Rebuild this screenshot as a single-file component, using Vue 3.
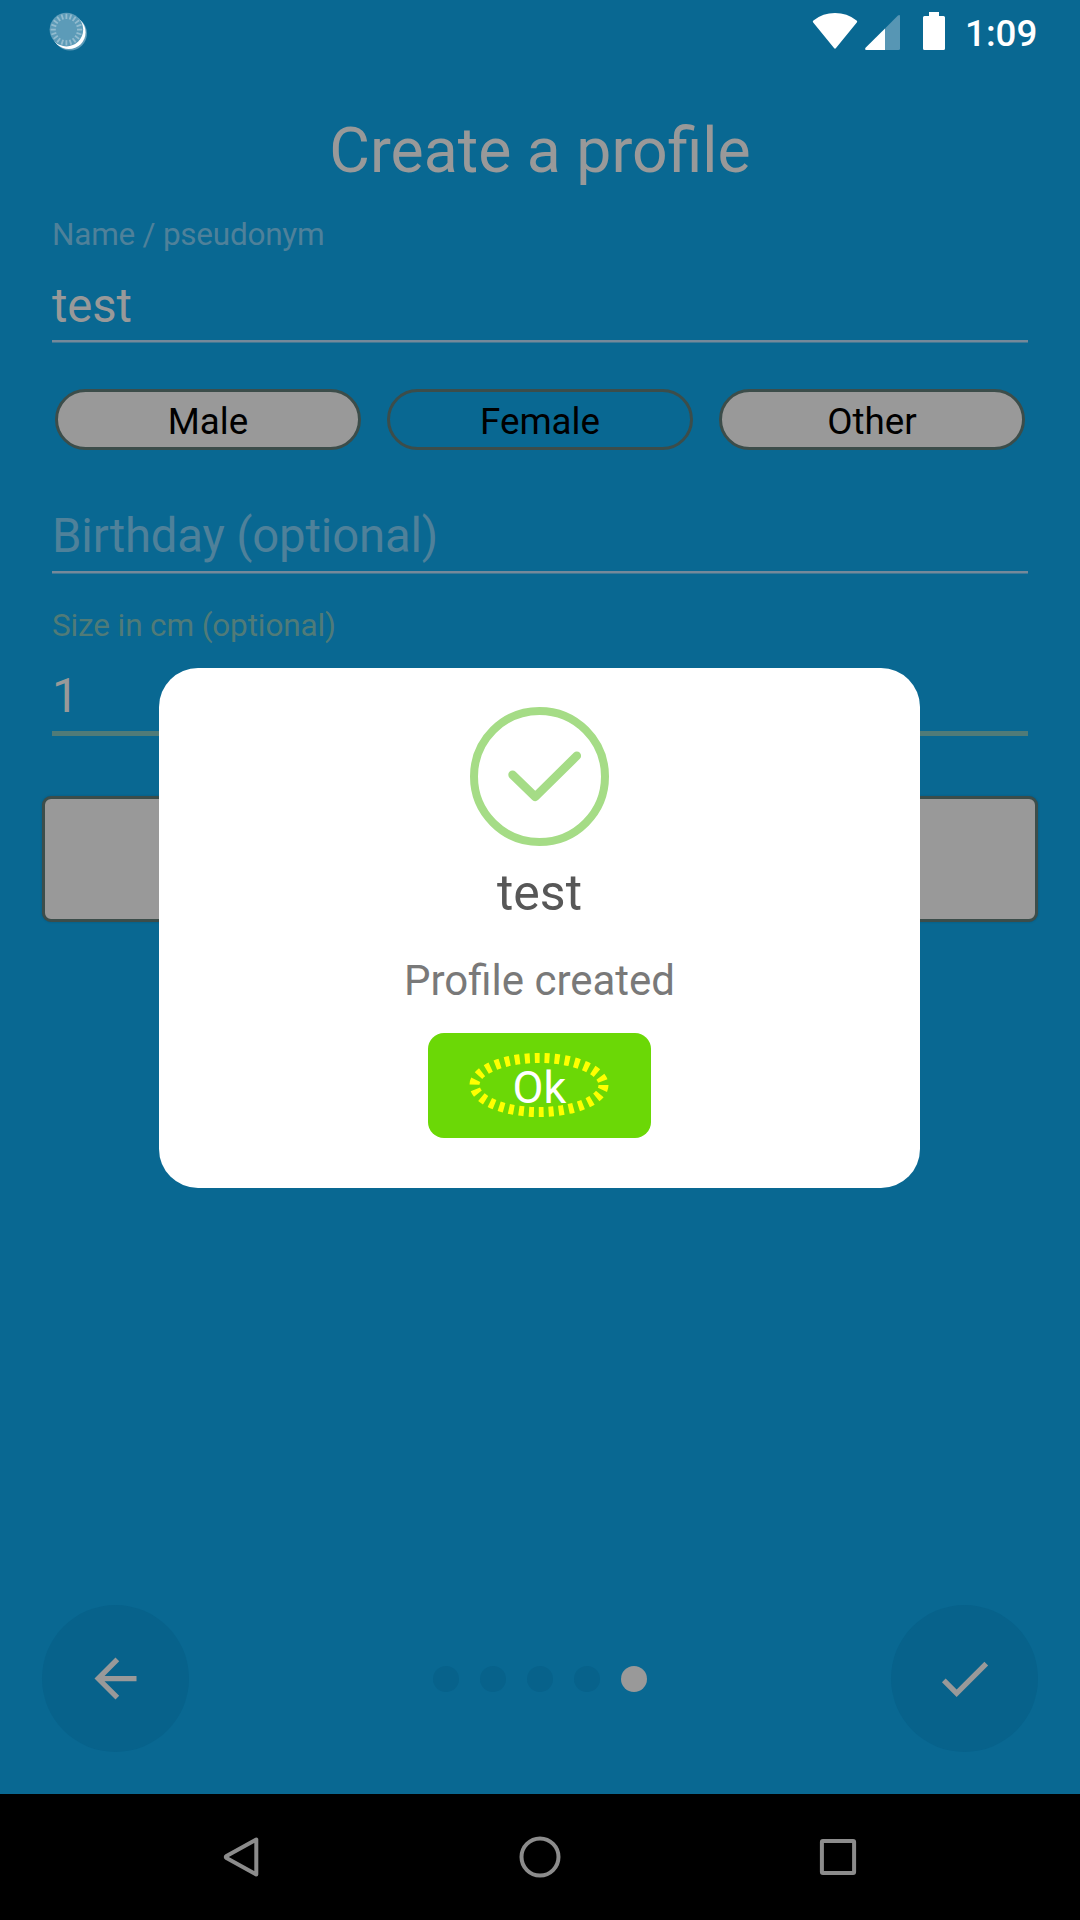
<script setup>
const ticks = Array.from({ length: 20 }, (_, i) => i * 18)
const genders = [
  { label: 'Male', selected: false },
  { label: 'Female', selected: true },
  { label: 'Other', selected: false },
]
const steps = 5
const current = 5
</script>

<template>
  <div class="screen">
    <header class="status">
      <svg class="spinner" width="40" height="42" viewBox="0 0 40 42">
        <circle cx="22" cy="23.600" r="17" fill="#5c9bb8" />
        <circle cx="20.800" cy="22.300" r="16.800" fill="#fff" />
        <circle cx="18.400" cy="19.600" r="16.800" fill="#5c9bb8" />
        <g stroke="#93bccf" stroke-width="1.800">
          <line v-for="a in ticks" :key="a" x1="18.400" y1="9" x2="18.400" y2="3.800" :transform="`rotate(${a} 18.400 19.600)`" />
        </g>
      </svg>
      <svg class="signals" width="140" height="42" viewBox="0 0 140 42">
        <path fill="#fff" d="M3.200 12.600Q2.200 11.400 3.400 10.400Q13 3 25 3Q37 3 46.600 10.400Q47.800 11.400 46.800 12.600L26 38Q25 39.600 24 38Z" />
        <path fill="#5796b4" d="M75 18.400L87.700 5.700Q90 4 90 6.500V38.500Q90 40 88.500 40H75Z" />
        <path fill="#fff" d="M75 18.400V40H56.500Q54 40 55.800 37.600Z" />
        <path fill="#fff" d="M119 2H129V6H133.500Q135 6 135 7.500V38.500Q135 40 133.500 40H114.500Q113 40 113 38.500V7.500Q113 6 114.500 6H119Z" />
      </svg>
      <span class="clock">1:09</span>
    </header>

    <main>
      <h1>Create a profile</h1>
      <div class="field name">
        <label>Name / pseudonym</label>
        <div class="value">test</div>
        <div class="rule"></div>
      </div>
      <div class="genders">
        <div v-for="g in genders" :key="g.label" class="pill" :class="{ selected: g.selected }">{{ g.label }}</div>
      </div>
      <div class="field birthday">
        <div class="value hint">Birthday (optional)</div>
        <div class="rule"></div>
      </div>
      <div class="field size">
        <label>Size in cm (optional)</label>
        <div class="value">1</div>
        <div class="rule focus"></div>
      </div>
      <div class="action"></div>
    </main>

    <footer class="pager">
      <div class="round">
        <svg width="63" height="63" viewBox="0 0 24 24"><path fill="#999" d="M20 11H7.830l5.590-5.590L12 4l-8 8 8 8 1.410-1.410L7.830 13H20v-2z" /></svg>
      </div>
      <div class="dots">
        <i v-for="n in steps" :key="n" :class="{ on: n === current }"></i>
      </div>
      <div class="round">
        <svg width="63" height="63" viewBox="0 0 24 24"><path fill="#999" d="M9 16.170L4.830 12l-1.420 1.410L9 19 21 7l-1.410-1.410z" /></svg>
      </div>
    </footer>

    <nav>
      <svg width="44" height="44" viewBox="0 0 44 44"><path d="M36.300 4.500V39.500L6.500 23Q5 22 6.500 21Z" /></svg>
      <svg width="44" height="44" viewBox="0 0 44 44"><circle cx="22" cy="22" r="18.500" /></svg>
      <svg width="44" height="44" viewBox="0 0 44 44"><rect x="5.900" y="5.900" width="32.200" height="32.200" rx="1" /></svg>
    </nav>

    <div class="dialog">
      <svg class="success" width="139" height="139" viewBox="0 0 139 139" fill="none" stroke="#a5dc86">
        <circle cx="69.500" cy="69.500" r="65.500" stroke-width="8" />
        <path d="M42.600 67.800L65.300 89.800L106.800 48.800" stroke-width="8.600" stroke-linecap="round" stroke-linejoin="round" />
      </svg>
      <div class="dialog-title">test</div>
      <div class="dialog-text">Profile created</div>
      <div class="ok">
        <span>Ok</span>
        <svg class="ring" width="140" height="66" viewBox="0 0 140 66">
          <ellipse cx="70" cy="33" rx="64.500" ry="27" fill="none" stroke="#ff0" stroke-width="10" stroke-dasharray="5 5" />
        </svg>
      </div>
    </div>
  </div>
</template>

<style>
body {
  margin: 0;
  background: #096892;
}
</style>

<style scoped>
.screen {
  position: relative;
  display: flex;
  flex-direction: column;
  width: 1080px;
  height: 1920px;
  overflow: hidden;
  background: #096892;
  font-family: Roboto, sans-serif;
  color: #999;
}
.screen * {
  box-sizing: border-box;
}
svg {
  display: block;
  flex: none;
}
.status {
  display: flex;
  align-items: flex-start;
  height: 63px;
  padding: 10px 42px 0 48px;
  color: #fff;
}
.signals {
  margin-left: auto;
}
.clock {
  width: 73px;
  margin-left: 15px;
  padding-top: 2px;
  font-size: 36.75px;
  font-weight: 500;
  line-height: 44px;
  white-space: nowrap;
}
main {
  flex: none;
  padding: 0 52px;
}
h1 {
  margin: 51px 0 0;
  font-size: 62.5px;
  font-weight: 400;
  line-height: 74px;
  text-align: center;
}
label {
  display: block;
  height: 37px;
  font-size: 31.5px;
  line-height: 37px;
  letter-spacing: -0.24px;
  color: #4f819a;
}
.value {
  height: 56px;
  font-size: 47.25px;
  line-height: 57px;
  letter-spacing: -0.15px;
}
label + .value {
  margin-top: 24px;
}
.name .value {
  line-height: 58px;
}
.hint {
  color: #4f819a;
}
.rule {
  height: 3px;
  margin-top: 7px;
  background: linear-gradient(#75899a 2px, #3f7996 2px);
}
.name {
  margin-top: 28px;
}
.genders {
  display: flex;
  gap: 26px;
  margin: 46px 3px 0;
}
.pill {
  width: 306px;
  height: 61px;
  padding-top: 2px;
  border: 3px solid #3c4d4a;
  border-radius: 31px;
  background: #999;
  color: #000;
  font-size: 36.75px;
  line-height: 55px;
  text-align: center;
}
.pill.selected {
  background: transparent;
}
.birthday {
  margin-top: 58px;
}
.size {
  margin-top: 33px;
}
.size label {
  color: #507b78;
  letter-spacing: -0.13px;
}
.rule.focus {
  height: 5px;
  background: #507b78;
}
.action {
  height: 126px;
  margin: 60px -10px 0;
  border: 3px solid #3c4d4a;
  border-radius: 9px;
  background: #999;
  box-shadow: 0 0 2px rgba(0, 40, 60, 0.3);
}
.pager {
  display: flex;
  align-items: center;
  justify-content: space-between;
  height: 147px;
  margin: auto 42px 42px;
}
.round {
  display: flex;
  align-items: center;
  justify-content: center;
  width: 147px;
  height: 147px;
  border-radius: 50%;
  background: #07628b;
}
.dots {
  display: flex;
  gap: 21px;
}
.dots i {
  width: 26px;
  height: 26px;
  border-radius: 50%;
  background: #07628b;
}
.dots i.on {
  background: #999;
}
nav {
  display: flex;
  align-items: center;
  justify-content: space-between;
  height: 126px;
  padding: 0 220px;
  background: #000;
}
nav svg {
  fill: none;
  stroke: #8c8c8c;
  stroke-width: 4;
  stroke-linejoin: round;
}
.dialog {
  position: absolute;
  left: 159px;
  top: 668px;
  display: flex;
  flex-direction: column;
  align-items: center;
  width: 761px;
  height: 520px;
  padding-top: 39px;
  border-radius: 39px;
  background: #fff;
}
.dialog-title {
  margin-top: 18px;
  color: #575757;
  font-size: 50px;
  line-height: 58px;
}
.dialog-text {
  margin-top: 34px;
  color: #797979;
  font-size: 42px;
  line-height: 50px;
}
.ok {
  position: relative;
  width: 223px;
  height: 105px;
  margin-top: 27px;
  border-radius: 16px;
  background: #6bd806;
  color: #fff;
  font-size: 45px;
  line-height: 110px;
  text-align: center;
}
.ring {
  position: absolute;
  left: 41px;
  top: 19px;
}
</style>
